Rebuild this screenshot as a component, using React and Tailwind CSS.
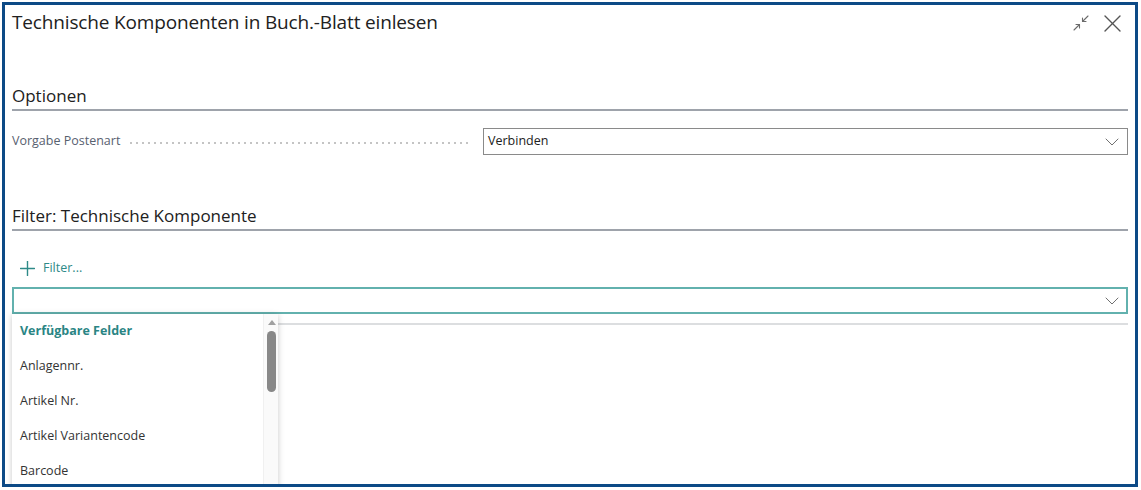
import React from "react";

const font = { fontFamily: '"Open Sans", "Noto Sans", "Liberation Sans", sans-serif' };

function CollapseIcon() {
  return (
    <svg width="16" height="16" viewBox="0 0 16 16" fill="none" stroke="#6b6b6b" strokeWidth="1.1" strokeLinecap="round" strokeLinejoin="round">
      <path d="M15 1 L9.5 6.5" />
      <path d="M9.5 3 L9.5 6.5 L13 6.5" />
      <path d="M1 15 L6.5 9.5" />
      <path d="M3 9.5 L6.5 9.5 L6.5 13" />
    </svg>
  );
}

function CloseIcon() {
  return (
    <svg width="17" height="17" viewBox="0 0 17 17" fill="none" stroke="#555" strokeWidth="1.4" strokeLinecap="round">
      <path d="M1 1 L16 16" />
      <path d="M16 1 L1 16" />
    </svg>
  );
}

function Chevron() {
  return (
    <svg width="14" height="8" viewBox="0 0 14 8" fill="none" stroke="#707070" strokeWidth="1" strokeLinecap="round" strokeLinejoin="round">
      <path d="M1 1 L7 7 L13 1" />
    </svg>
  );
}

function PlusIcon() {
  return (
    <svg width="15" height="15" viewBox="0 0 15 15" fill="none" stroke="#2e8a88" strokeWidth="1.4" strokeLinecap="round">
      <path d="M7.5 0.5 L7.5 14.5" />
      <path d="M0.5 7.5 L14.5 7.5" />
    </svg>
  );
}

export default function App() {
  const items = ["Anlagennr.", "Artikel Nr.", "Artikel Variantencode", "Barcode"];
  return (
    <div className="w-[1141px] h-[490px] bg-white pt-[2px] pl-[2px]" style={font}>
      <div className="w-[1136px] h-[485px] border-[3px] border-[#0c4a86] overflow-hidden flex flex-col pl-[7px] pr-[7px]">
        {/* Title row */}
        <div className="h-[35px] flex items-center justify-between shrink-0">
          <div className="text-[19px] text-[#212121] tracking-[-0.15px]">Technische Komponenten in Buch.-Blatt einlesen</div>
          <div className="flex items-center gap-[15px] pr-[7px] pt-[1px]">
            <CollapseIcon />
            <CloseIcon />
          </div>
        </div>

        {/* Optionen heading */}
        <div className="mt-[43px] h-[28px] shrink-0 flex items-center border-b-2 border-[#9ea3ab] text-[17px] text-[#212121]">
          Optionen
        </div>

        {/* Field row */}
        <div className="mt-[17px] h-[27px] shrink-0 flex">
          <div className="w-[471px] flex items-center pr-[13px]">
            <span className="text-[12.5px] text-[#58616f] whitespace-nowrap">Vorgabe Postenart</span>
            <span className="flex-1 ml-[8px] mt-[3px] h-[2px] bg-[radial-gradient(circle,#c4c4c4_0.9px,transparent_1px)] bg-[length:6px_2px]"></span>
          </div>
          <div className="flex-1 border border-[#8a8a8a] flex items-center justify-between pl-[4px] pr-[8px]">
            <span className="text-[12.5px] text-[#212121]">Verbinden</span>
            <Chevron />
          </div>
        </div>

        {/* Filter heading */}
        <div className="mt-[48px] h-[28px] shrink-0 flex items-center border-b-2 border-[#9ea3ab] text-[17px] text-[#212121]">
          Filter: Technische Komponente
        </div>

        {/* Filter link */}
        <div className="mt-[24px] h-[26px] shrink-0 flex items-center pl-[8px] gap-[8px]">
          <PlusIcon />
          <span className="text-[12.5px] text-[#2e8a88]">Filter...</span>
        </div>

        {/* Input with dropdown */}
        <div className="relative mt-[6px] shrink-0">
          <div className="h-[27px] border-2 border-[#62b1ae] flex items-center justify-end pr-[7px]">
            <Chevron />
          </div>
          <div className="mt-[9px] h-[2px] bg-[#dcdee0]"></div>

          <div className="absolute left-0 top-[27px] w-[266px] h-[200px] bg-white shadow-[0_1px_6px_rgba(0,0,0,0.22)] z-10">
            <div className="h-[35px] flex items-center pl-[8px] text-[12.5px] font-bold text-[#2a8584]">
              Verfügbare Felder
            </div>
            {items.map((t) => (
              <div key={t} className="h-[35px] flex items-center pl-[8px] text-[12.5px] text-[#333333]">
                {t}
              </div>
            ))}
            <div className="absolute right-0 top-0 w-[15px] h-full bg-[#fafafa] border-l border-[#f0f0f0]">
              <div className="absolute left-[4px] top-[6px] w-0 h-0 border-l-[4px] border-r-[4px] border-b-[5px] border-l-transparent border-r-transparent border-b-[#a0a0a0]"></div>
              <div className="absolute left-[3px] top-[17px] w-[9px] h-[61px] rounded-full bg-[#888888]"></div>
            </div>
          </div>
        </div>
      </div>
    </div>
  );
}
